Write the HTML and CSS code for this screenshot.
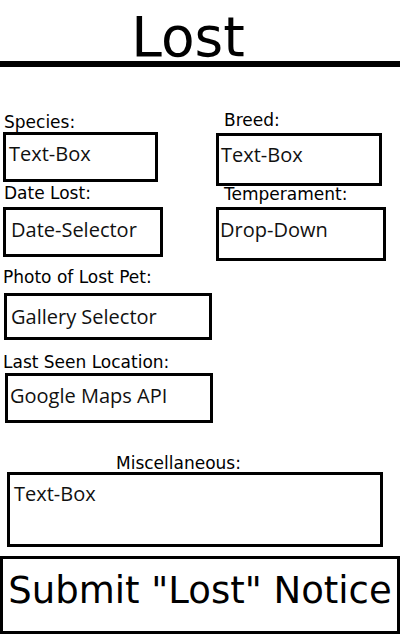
FILE: index.html
```html
<!DOCTYPE html>
<html>
<head>
<meta charset="utf-8">
<title>Lost</title>
<link rel="stylesheet" href="styles.css">
</head>
<body>
<header class="topbar">
  <h1 class="title">Lost</h1>
</header>
<main class="form">
  <label class="label label-species">Species:</label>
  <label class="label label-breed">Breed:</label>
  <div class="box box-species">Text-Box</div>
  <div class="box box-breed">Text-Box</div>
  <label class="label label-date">Date Lost:</label>
  <label class="label label-temp">Temperament:</label>
  <div class="box box-date">Date-Selector</div>
  <div class="box box-drop">Drop-Down</div>
  <label class="label wide label-photo">Photo of Lost Pet:</label>
  <div class="box wide box-gallery">Gallery Selector</div>
  <label class="label wide label-seen">Last Seen Location:</label>
  <div class="box wide box-maps">Google Maps API</div>
  <label class="label wide label-misc">Miscellaneous:</label>
  <div class="box wide box-misc">Text-Box</div>
</main>
<button class="submit" type="button">Submit "Lost" Notice</button>
</body>
</html>
```
FILE: styles.css
```css
html, body {
  margin: 0;
  padding: 0;
  background: #fff;
  color: #000;
  font-family: "DejaVu Sans", sans-serif;
}
body {
  width: 400px;
  height: 640px;
  overflow: hidden;
}
.topbar {
  box-sizing: border-box;
  height: 67px;
  border-bottom: 6px solid #000;
  padding-top: 10px;
}
.title {
  margin: 0;
  padding-right: 24px;
  font-size: 55px;
  line-height: 55px;
  font-weight: normal;
  text-align: center;
}
.form {
  display: grid;
  grid-template-columns: 213px 1fr;
  align-items: start;
  padding-left: 3px;
  margin-top: 46px;
}
.wide {
  grid-column: 1 / -1;
}
.label {
  display: block;
  font-size: 17px;
  line-height: 14px;
  height: 14px;
  white-space: nowrap;
}
.box {
  box-sizing: border-box;
  border: 3px solid #000;
  font-family: "Open Sans", "Noto Sans", sans-serif;
  font-size: 20px;
  line-height: 24px;
  color: #111;
  white-space: nowrap;
}
.label-species { margin-top: 2px; margin-left: 1px; }
.label-breed { margin-left: 8px; }
.box-species { margin-top: 3px; width: 155px; height: 50px; padding: 7px 0 0 3px; }
.box-breed { margin-top: 4px; width: 166px; height: 53px; padding: 7px 0 0 2px; }
.label-date { margin-left: 1px; }
.label-temp { margin-top: 1px; margin-left: 8px; }
.box-date { margin-top: 6px; width: 160px; height: 50px; padding: 8px 0 0 5px; }
.box-drop { margin-top: 6px; width: 170px; height: 54px; padding: 8px 0 0 1px; }
.label-photo { margin-top: 9px; }
.box-gallery { margin-top: 9px; margin-left: 1px; width: 208px; height: 47px; padding: 9px 0 0 4px; }
.label-seen { margin-top: 15px; }
.box-maps { margin-top: 4px; margin-left: 2px; width: 208px; height: 50px; padding: 8px 0 0 2px; }
.label-misc { margin-top: 33px; margin-left: 113px; }
.box-misc { margin-top: 2px; margin-left: 4px; width: 376px; height: 75px; padding: 7px 0 0 4px; }
.submit {
  display: block;
  box-sizing: border-box;
  margin: 9px 0 0 0;
  width: 400px;
  height: 78px;
  border: 3px solid #000;
  border-radius: 0;
  background: #fff;
  color: #000;
  font-family: "DejaVu Sans", sans-serif;
  font-size: 37px;
  line-height: 44px;
  padding: 0 0 8px 0;
  text-align: center;
}
```
